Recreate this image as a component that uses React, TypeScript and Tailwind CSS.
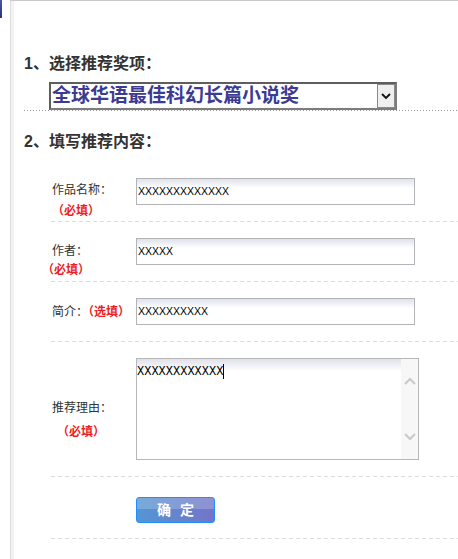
import React from "react";

const cjk = { fontFamily: '"Liberation Sans", "Noto Sans CJK SC", sans-serif' };

function Dashed() {
    return <div className="h-px w-full bg-[repeating-linear-gradient(90deg,#dcdcdc_0_4px,transparent_4px_7px)]" />;
}

function Must({ shift = "ml-0", top = "mt-[5px]" }: { shift?: string; top?: string }) {
    return <p className={`${shift} ${top} text-[12px] leading-[16px] font-bold text-[#ee1c25]`}>（必填）</p>;
}

function TextBox({ value }: { value: string }) {
    return (
        <div className="w-[279px] h-[27px] border border-[#b4b4b8] bg-[linear-gradient(#dfe1ea,#ffffff_9px)] flex items-center pl-px">
            <span className="text-[10.5px] text-black" style={{ fontFamily: '"Liberation Sans", sans-serif' }}>{value}</span>
        </div>
    );
}

function Chevron({ up }: { up?: boolean }) {
    return (
        <svg width="12" height="8" viewBox="0 0 12 8">
            <path d={up ? "M1 7 L6 2 L11 7" : "M1 1 L6 6 L11 1"} fill="none" stroke="#c9c9c9" strokeWidth="2" />
        </svg>
    );
}

export default function App() {
    return (
        <div className="w-[458px] h-[559px] bg-white flex overflow-hidden" style={cjk}>
            <div className="w-[10px] shrink-0">
                <div className="w-[2px] h-[18px] bg-[linear-gradient(#4a58b0,#28337a)]" />
            </div>
            <div className="flex-1 flex border-t border-[#c9c9c9]">
                <div className="w-px bg-[#dedede]" />
                <div className="w-[3px] bg-[#f3f3f3]" />
                <div className="flex-1 pl-[10px]">
                    <h2 className="mt-[53px] h-[20px] leading-[20px] text-[16px] font-bold text-[#333]">1、选择推荐奖项：</h2>

                    <div className="mt-[8px] ml-[25px] w-[348px] h-[28px] border-2 border-[#7c7c7c] border-t-[#5e5e5e] border-l-[#5e5e5e] bg-white flex items-center">
                        <span className="flex-1 pl-px text-[19px] leading-[24px] font-bold text-[#3b3b92]">全球华语最佳科幻长篇小说奖</span>
                        <div className="w-[18px] h-[24px] border border-[#8a8a8a] bg-[#efefef] flex items-center justify-center">
                            <svg width="10" height="7" viewBox="0 0 10 7">
                                <path d="M1 1 L5 5 L9 1" fill="none" stroke="#111" strokeWidth="1.8" />
                            </svg>
                        </div>
                    </div>
                    <div className="h-px w-full bg-[repeating-linear-gradient(90deg,#9a9a9a_0_1px,transparent_1px_3px)]" />

                    <h2 className="mt-[21px] h-[20px] leading-[20px] text-[16px] font-bold text-[#333]">2、填写推荐内容：</h2>

                    <div className="ml-[27px]">
                        {/* 作品名称 */}
                        <div className="h-[69px] flex">
                            <div className="w-[85px] pl-px pt-[30px] text-[12px] leading-[16px] text-[#333]">
                                <p>作品名称：</p>
                                <Must />
                            </div>
                            <div className="pt-[26px]"><TextBox value="XXXXXXXXXXXXX" /></div>
                        </div>
                        <Dashed />

                        {/* 作者 */}
                        <div className="h-[59px] flex">
                            <div className="w-[85px] pl-px pt-[21px] text-[12px] leading-[16px] text-[#333]">
                                <p>作者：</p>
                                <Must shift="-ml-[10px]" top="mt-[3px]" />
                            </div>
                            <div className="pt-[16px]"><TextBox value="XXXXX" /></div>
                        </div>
                        <Dashed />

                        {/* 简介 */}
                        <div className="h-[59px] flex">
                            <div className="w-[85px] pl-px pt-[22px] text-[12px] leading-[16px] text-[#333] whitespace-nowrap">
                                简介：<span className="font-bold text-[#ee1c25]">（选填）</span>
                            </div>
                            <div className="pt-[16px]"><TextBox value="XXXXXXXXXX" /></div>
                        </div>
                        <Dashed />

                        {/* 推荐理由 */}
                        <div className="h-[134px] flex">
                            <div className="w-[85px] pl-px pt-[58px] text-[12px] leading-[16px] text-[#333]">
                                <p>推荐理由：</p>
                                <Must shift="ml-[5px]" top="mt-[8px]" />
                            </div>
                            <div className="pt-[16px]">
                                <div className="w-[283px] h-[102px] border border-[#b7b7b7] flex bg-white">
                                    <div className="flex-1 bg-[linear-gradient(#dfe1ea,#ffffff_12px)] h-[14px]">
                                        <div className="flex items-center pt-[5px]">
                                            <span className="text-[12px] leading-[14px] text-black" style={{ fontFamily: '"Liberation Mono", monospace' }}>XXXXXXXXXXXX</span>
                                            <span className="w-px h-[15px] bg-black" />
                                        </div>
                                    </div>
                                    <div className="w-[17px] bg-[#f7f7f7] flex flex-col items-center pt-[18px]">
                                        <Chevron up />
                                        <div className="h-[48px]" />
                                        <Chevron />
                                    </div>
                                </div>
                            </div>
                        </div>
                        <Dashed />

                        {/* 确定 */}
                        <div className="h-[61px] flex">
                            <div className="w-[85px]" />
                            <div className="pt-[20px]">
                                <button className="relative w-[79px] h-[26px] rounded-[3px] border border-[#1f8fff] overflow-hidden bg-[linear-gradient(90deg,#5496d3,#7475c8)] text-white font-bold text-[14px] tracking-[9px] pl-[9px]">
                                    <span className="absolute inset-x-0 top-0 h-[11px] bg-white/20" />
                                    <span className="relative">确定</span>
                                </button>
                            </div>
                        </div>
                        <Dashed />
                    </div>
                </div>
            </div>
        </div>
    );
}
